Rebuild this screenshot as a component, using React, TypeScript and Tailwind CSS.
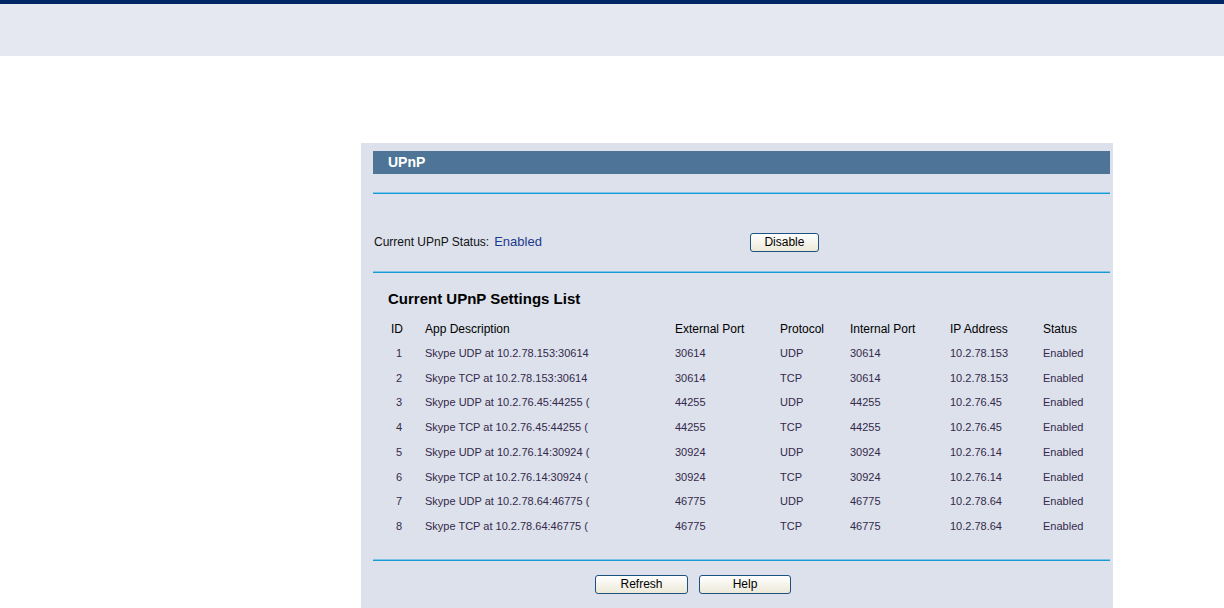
const rows = [
  ["1", "Skype UDP at 10.2.78.153:30614", "30614", "UDP", "30614", "10.2.78.153"],
  ["2", "Skype TCP at 10.2.78.153:30614", "30614", "TCP", "30614", "10.2.78.153"],
  ["3", "Skype UDP at 10.2.76.45:44255 (", "44255", "UDP", "44255", "10.2.76.45"],
  ["4", "Skype TCP at 10.2.76.45:44255 (", "44255", "TCP", "44255", "10.2.76.45"],
  ["5", "Skype UDP at 10.2.76.14:30924 (", "30924", "UDP", "30924", "10.2.76.14"],
  ["6", "Skype TCP at 10.2.76.14:30924 (", "30924", "TCP", "30924", "10.2.76.14"],
  ["7", "Skype UDP at 10.2.78.64:46775 (", "46775", "UDP", "46775", "10.2.78.64"],
  ["8", "Skype TCP at 10.2.78.64:46775 (", "46775", "TCP", "46775", "10.2.78.64"],
];

const cols = "grid grid-cols-[37px_250px_105px_70px_100px_93px_60px]";

function Btn({ label, w }: { label: string; w: string }) {
  return (
    <button
      className={`${w} h-[19px] rounded-[3px] border border-[#1c5180] bg-gradient-to-b from-white to-[#ece9d8] text-[12px] leading-none text-black`}
    >
      {label}
    </button>
  );
}

function Line() {
  return <div className="h-[2px] border-t border-[#7fc4e6] bg-[#1a9bd7]" />;
}

export default function App() {
  return (
    <div className="min-h-[608px] bg-white font-['Liberation_Sans',Arial,sans-serif]">
      <div className="h-[4px] bg-[#002663]" />
      <div className="h-[52px] bg-[#e5e8f1]" />
      <div className="ml-[361px] mt-[87px] h-[465px] w-[752px] bg-[#dce1ec] pl-[12px] pr-[3px] pt-[8px]">
        <div className="flex h-[23px] items-center bg-[#4e7598] pl-[15px] text-[14px] font-bold text-white">UPnP</div>
        <div className="mt-[18px]">
          <Line />
        </div>
        <div className="mt-[39px] flex h-[18px] items-center text-[12px]">
          <span className="pl-[1px] text-[#111]">Current UPnP Status:</span>
          <span className="ml-[5px] text-[13px] text-[#1d3a8c]">Enabled</span>
          <div className="ml-[208px] flex">
            <Btn label="Disable" w="w-[69px]" />
          </div>
        </div>
        <div className="mt-[20px]">
          <Line />
        </div>
        <div className="mt-[17px] pl-[15px] text-[15px] font-bold leading-[18px] text-black">Current UPnP Settings List</div>
        <div className="mt-[9px] pl-[15px]">
          <div className={`${cols} h-[24px] items-center text-[12px] text-black`}>
            <span className="pl-[3px]">ID</span>
            <span>App Description</span>
            <span>External Port</span>
            <span>Protocol</span>
            <span>Internal Port</span>
            <span>IP Address</span>
            <span>Status</span>
          </div>
          {rows.map((r) => (
            <div key={r[0]} className={`${cols} h-[24.7px] items-center text-[11px] text-[#35294a]`}>
              <span className="pl-[8px]">{r[0]}</span>
              <span>{r[1]}</span>
              <span>{r[2]}</span>
              <span>{r[3]}</span>
              <span>{r[4]}</span>
              <span>{r[5]}</span>
              <span>Enabled</span>
            </div>
          ))}
        </div>
        <div className="mt-[20px]">
          <Line />
        </div>
        <div className="mt-[14px] flex gap-[11px] pl-[222px]">
          <Btn label="Refresh" w="w-[93px]" />
          <Btn label="Help" w="w-[92px]" />
        </div>
      </div>
    </div>
  );
}
